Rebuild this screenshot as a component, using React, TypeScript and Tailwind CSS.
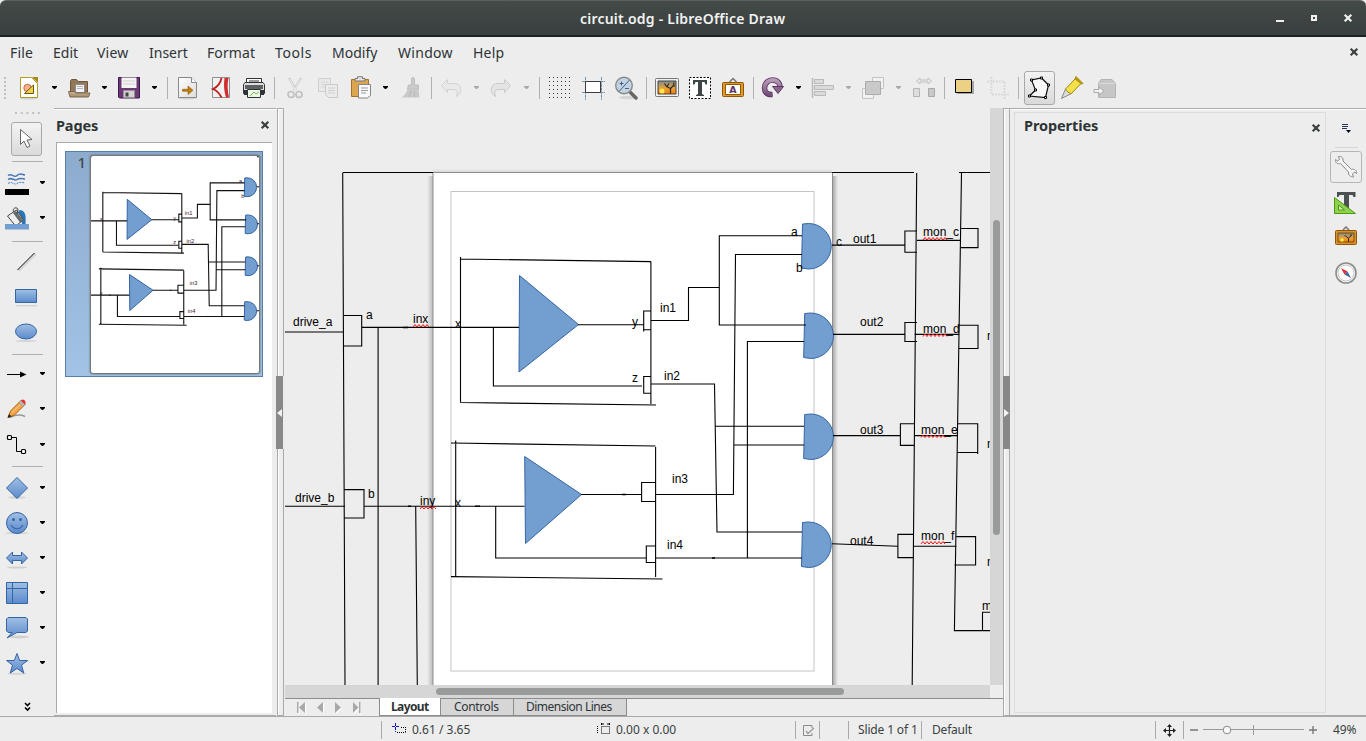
import React from "react";

type P = { children?: React.ReactNode; className?: string };

const Ico = ({ children, className = "" }: P) => (
  <svg viewBox="0 0 24 24" width="24" height="24" fill="none" className={"block shrink-0 " + className}>
    {children}
  </svg>
);

const Arrow = ({ off = false, className = "ml-[9px]" }: { off?: boolean; className?: string }) => (
  <svg viewBox="0 0 8 24" width="8" height="24" className={"block shrink-0 " + className}>
    <path d="M2 10h5v1l-2 2h-1l-2-2z" fill={off ? "#a9a9a9" : "#000"} />
  </svg>
);

const Sep = ({ className = "ml-2" }: P) => <div className={"h-[22px] w-px shrink-0 bg-[#b1b1b1] " + className} />;

const Cross = ({ color, className = "" }: { color: string; className?: string }) => (
  <svg viewBox="0 0 10 10" width="10" height="10" className={"block shrink-0 " + className}>
    <path d="M1.7 1.7l6.6 6.6M8.3 1.7L1.7 8.3" stroke={color} strokeWidth="2.2" />
  </svg>
);

const Defs = () => (
  <svg width="0" height="0" className="absolute">
    <defs>
      <linearGradient id="blue" x1="0" y1="0" x2="0" y2="1">
        <stop offset="0" stopColor="#a0bfe4" />
        <stop offset="1" stopColor="#5b8acb" />
      </linearGradient>
      <linearGradient id="sky" x1="0" y1="0" x2="0" y2="1">
        <stop offset="0" stopColor="#7c8a93" />
        <stop offset=".55" stopColor="#e8a33c" />
        <stop offset="1" stopColor="#f57900" />
      </linearGradient>
      <linearGradient id="paper" x1="0" y1="0" x2="1" y2="1">
        <stop offset="0" stopColor="#ffffff" />
        <stop offset="1" stopColor="#dcdcdc" />
      </linearGradient>
      <linearGradient id="purple" x1="0" y1="0" x2="0" y2="1">
        <stop offset="0" stopColor="#b79ab8" />
        <stop offset="1" stopColor="#75507b" />
      </linearGradient>
      <linearGradient id="tan" x1="0" y1="0" x2="0" y2="1">
        <stop offset="0" stopColor="#c9b598" />
        <stop offset="1" stopColor="#a48b6a" />
      </linearGradient>
      <linearGradient id="shade" x1="0" y1="0" x2="1" y2="0">
        <stop offset="0" stopColor="#000" stopOpacity="0" />
        <stop offset="1" stopColor="#000" stopOpacity=".22" />
      </linearGradient>
      <linearGradient id="shadeR" x1="1" y1="0" x2="0" y2="0">
        <stop offset="0" stopColor="#000" stopOpacity="0" />
        <stop offset="1" stopColor="#000" stopOpacity=".33" />
      </linearGradient>
      <linearGradient id="shadeT" x1="0" y1="0" x2="0" y2="1">
        <stop offset="0" stopColor="#000" stopOpacity="0" />
        <stop offset="1" stopColor="#000" stopOpacity=".12" />
      </linearGradient>
    </defs>
  </svg>
);

function Toolbar() {
  return (
    <div className="flex h-[40px] items-center">
      <svg width="2" height="24" viewBox="0 0 2 24" className="ml-1 block shrink-0">
        <path d="M1 1v23" stroke="#c0c0c0" strokeWidth="2" strokeDasharray="2 2" />
      </svg>
      <Ico className="ml-[11px]">
        <ellipse cx="12" cy="22.3" rx="9" ry="1.3" fill="#d3d3d3" />
        <path d="M3.500 1.500h11l6 6v14h-17z" fill="#fff" stroke="#b49a23" />
        <path d="M15 1h6v6z" fill="#a88a10" />
        <circle cx="10.500" cy="12" r="3.700" fill="#f6b08f" stroke="#d0633a" />
        <path d="M7.500 17.500h9V9z" fill="#edd44a" stroke="#6d550a" />
      </Ico>
      <Arrow />
      <Ico className="ml-[9px]">
        <path d="M3.500 16V5l1-1.500h5l1.500 2h9.500V16z" fill="#93795a" stroke="#6e5637" />
        <path d="M8.500 8.500h9v8h-9z" fill="#f4f4f4" stroke="#8b8b8b" />
        <path d="M10 10.500h6M10 12.500h6" stroke="#b5b5b5" />
        <path d="M1.500 15.500h6l1.500 1.500h14l-1.500 4h-18.500z" fill="url(#tan)" stroke="#7d6647" />
      </Ico>
      <Arrow />
      <Ico className="ml-[9px]">
        <path d="M1.500 1.500h21v20.500h-20l-1-1z" fill="#6a3a75" stroke="#40154c" />
        <path d="M4.500 1.500h15v10.500h-15z" fill="#f4f4f4" />
        <path d="M6 5h12M6 8h12" stroke="#cfcfcf" />
        <path d="M6.500 14.500h11v7h-11z" fill="#d4d4cf" stroke="#9b8da0" />
        <path d="M8.500 16.500h3v4h-3z" fill="#454545" />
      </Ico>
      <Arrow />
      <Sep className="ml-[9px]" />
      <Ico className="ml-[7px]">
        <ellipse cx="12" cy="22" rx="10" ry="1.500" fill="#d3d3d3" />
        <path d="M3.500 1.500h13l5 5v15h-18z" fill="url(#paper)" stroke="#888a85" />
        <path d="M16.500 1.500v5h5" fill="#fff" stroke="#888a85" />
        <path d="M7.500 13.300h5.500V10l5 4.300-5 4.200v-3.200H7.500z" fill="#c17d11" stroke="#8f5902" strokeWidth=".6" />
      </Ico>
      <Ico className="ml-[10px]">
        <path d="M3.500 1.500h17v20h-17z" fill="#f1f1f1" stroke="#8f8f8f" />
        <path d="M15.500 2h4c-1.500 6-1 13 .5 19.500h-3c-2-6.500-2.500-13-1.500-19.500z" fill="#d12b2b" />
        <path d="M12.500 2c-1 5-4 9-8.500 11 4 1.500 6.500 4.500 8.500 8.500" stroke="#c01f1f" strokeWidth="1.800" />
      </Ico>
      <Ico className="ml-[9px]">
        <path d="M4.500 2.500h15v6h-15z" fill="#fafafa" stroke="#2e3436" />
        <path d="M3 6.500h18l1.500 2v9h-21v-9z" fill="#ddd" stroke="#2e3436" />
        <path d="M3 9h18v4H3z" fill="#5b6163" />
        <path d="M7 5h10" stroke="#777" strokeWidth="1.500" />
        <path d="M2 14h20v5H2z" fill="#2e3436" />
        <path d="M5.500 13.500h13v8h-13z" fill="#eef6e8" stroke="#2e3436" />
        <path d="M8 20l4-4 2 2 3-2" stroke="#73c04a" />
      </Ico>
      <Sep />
      <Ico className="ml-2">
        <path d="M6 2l7 12M18 2l-7 12" stroke="#c9c9c9" strokeWidth="2.200" />
        <path d="M6.500 3l6 11M17.500 3l-6 11" stroke="#efefef" strokeWidth=".9" />
        <circle cx="8" cy="18.500" r="3" stroke="#c1c1c1" strokeWidth="1.700" />
        <circle cx="16" cy="18.500" r="3" stroke="#c1c1c1" strokeWidth="1.700" />
      </Ico>
      <Ico className="ml-[9px]">
        <path d="M2.500 2.500h12v13h-12z" fill="#e9e9e9" stroke="#d0d0d0" />
        <path d="M5 6h7M5 8.500h7M5 11h7" stroke="#d6d6d6" />
        <path d="M9.500 8.500h12v13h-9l-3-3z" fill="#ebebeb" stroke="#c9c9c9" />
        <path d="M12 12h7M12 14.500h7M12 17h7" stroke="#cfcfcf" />
      </Ico>
      <Ico className="ml-[9px]">
        <path d="M2.500 3.500h17v17h-17z" fill="#dea550" stroke="#a4702a" />
        <path d="M6 5V2.500h2.500V.8h5v1.700H16V5z" fill="#e3e3e3" stroke="#777" />
        <path d="M9.500 8.500h12v11l-3 2.500h-9z" fill="#fafafa" stroke="#858585" />
        <path d="M12 12h7M12 14.500h7M12 17h5" stroke="#999" />
      </Ico>
      <Arrow className="ml-2" />
      <Ico className="ml-[10px]">
        <path d="M12.500 3c0-2 3-2 3 0v6h4v4h-11l1-4h3z" fill="#cbcbcb" stroke="#bdbdbd" />
        <path d="M8.500 13h11l1 8.500H2c3-1 5-4 6.500-8.500z" fill="#c9c9c9" />
        <path d="M12 15l-2 6M15.500 15v6" stroke="#b9b9b9" />
      </Ico>
      <Sep />
      <Ico className="ml-[7px]">
        <path d="M2.500 9.500l6-6v4h6c5 0 8 3 7 8-.5 2.500-2 4-4.500 5 2-3 2-7-3-7h-5.500v3z" fill="#e9e9e9" stroke="#d2d2d2" />
      </Ico>
      <Arrow off />
      <Ico className="ml-[9px]">
        <path d="M21.500 9.500l-6-6v4h-6c-5 0-8 3-7 8 .5 2.500 2 4 4.500 5-2-3-2-7 3-7h5.500v3z" fill="#e4e4e4" stroke="#cacaca" />
      </Ico>
      <Arrow off />
      <Sep className="ml-[9px]" />
      <Ico className="ml-2">
        {[1, 5, 9, 13, 17, 21].map((y) => (
          <path key={y} d={`M1 ${y + 0.500}h22`} stroke="#333" strokeDasharray="1 3" />
        ))}
      </Ico>
      <Ico className="ml-[9px]">
        <path d="M4.500 1v23M20.500 1v23M1 5.500h23M1 16.500h23" stroke="#7a94ac" strokeDasharray="3 .6" />
        <path d="M4.500 5.500h15v11h-15z" fill="#fff" stroke="#3c3c3c" />
      </Ico>
      <Ico className="ml-[9px]">
        <ellipse cx="14" cy="21.500" rx="9" ry="1.800" fill="#d6d6d6" />
        <path d="M16 16l6 6" stroke="#666" strokeWidth="3.500" strokeLinecap="round" />
        <circle cx="10" cy="9.500" r="8.300" fill="#c3d3e6" stroke="#888a85" strokeWidth="1.400" />
        <path d="M5 15.500L15.500 4M5.500 7.500h4M7.500 5.500v4M11 12.500h4" stroke="#4b6080" />
      </Ico>
      <Sep />
      <Ico className="ml-2">
        <rect x=".5" y="2.500" width="23" height="18" rx="1" fill="#f0f0ee" stroke="#777" />
        <path d="M3 5h18v13H3z" fill="url(#sky)" stroke="#444" />
        <circle cx="7" cy="15" r="2.500" fill="#fce94f" />
        <path d="M15.500 17.500v-5l3-3 .5-3M15.500 12.500l-4-2-2-3M12 10.500l2-3M18 10l2 0" stroke="#2e2a22" strokeWidth="1.200" />
      </Ico>
      <Ico className="ml-[9px]">
        <path d="M1.500 1.500h21v21h-21z" fill="#fff" stroke="#000" strokeDasharray="2 1.500" />
        <path d="M5 4h14v4.500h-1.500L16.500 6H14v12l2 1v1H8v-1l2-1V6H7.500l-1 2.500H5z" fill="#3f4648" />
      </Ico>
      <Ico className="ml-[9px]">
        <path d="M8.500 6L12 2.500 15.500 6" stroke="#777" strokeWidth="1.500" />
        <rect x="1.500" y="6.500" width="21" height="14" rx="1" fill="#e0982f" stroke="#8f5902" />
        <path d="M4.500 8.500h15v10h-15z" fill="#fff" stroke="#8f5902" />
        <text x="12" y="17" fontSize="9.500" fontWeight="bold" textAnchor="middle" fill="#5c3566" fontFamily="DejaVu Sans, sans-serif">A</text>
      </Ico>
      <Sep />
      <Ico className="ml-[6px]">
        <path d="M12.500 18.500C6 19 4.500 15 4.500 12c0-5 4-8 8-8 5 0 8 4 7.500 7.500" stroke="#5c3566" strokeWidth="5.500" />
        <path d="M12.500 18.500C6 19 4.500 15 4.500 12c0-5 4-8 8-8 5 0 8 4 7.500 7.500" stroke="url(#purple)" strokeWidth="3.800" />
        <path d="M12.500 10.500h11l-5.500 7z" fill="#8a6690" stroke="#5c3566" />
      </Ico>
      <Arrow className="ml-[10px]" />
      <Ico className="ml-[9px]">
        <path d="M1.500 2v20" stroke="#b9b9b9" strokeWidth="1.500" />
        <path d="M3.500 3.500h9v4h-9zM3.500 9.500h19v4h-19zM3.500 15.500h11v4h-11z" fill="#dadada" stroke="#b9b9b9" />
      </Ico>
      <Arrow off />
      <Ico className="ml-[9px]">
        <path d="M11.500 1.500h11v11h-11zM1.500 12.500h11v10h-11z" fill="#f2f2f2" stroke="#c4c4c4" />
        <path d="M4.500 5.500h15v13h-15z" fill="#c9c9c9" stroke="#acacac" />
      </Ico>
      <Arrow off />
      <Ico className="ml-[10px]">
        <path d="M4.500 5l3.500-3v2h8V2l3.500 3L16 8V6H8v2z" fill="#e8e8e8" stroke="#c2c2c2" />
        <path d="M1.500 12.500h6v8h-6z" fill="#dedede" stroke="#b5b5b5" />
        <path d="M16.500 12.500h6v8h-6z" fill="#c9c9c9" stroke="#a9a9a9" />
      </Ico>
      <Sep />
      <Ico className="ml-[7px]">
        <path d="M5 5h17v13H5z" fill="#777" opacity=".6" />
        <path d="M3.500 3.500h16v13h-16z" fill="#ecd184" stroke="#000" />
      </Ico>
      <Ico className="ml-[10px]">
        <path d="M5.500 1v17.500H23M1 5.500h17.500V23" stroke="#dadada" strokeWidth="2" strokeDasharray="2 1" />
      </Ico>
      <Sep />
      <div className="ml-[5px] flex h-[34px] w-[31px] shrink-0 items-center justify-center rounded-[3px] border border-[#a9a9a9] bg-gradient-to-b from-[#f3f3f3] to-[#d9d9d9]">
        <Ico>
          <path d="M1.500 20l6-6-4-10L13.500 2l7 7-3 12.500z" fill="#f8f8f8" stroke="#111" strokeWidth="1.200" />
          <path d="M.5 19h2v2h-2zM6.500 13h2v2h-2zM2.500 3h2v2h-2zM12.500 1h2v2h-2zM19.500 8h2v2h-2zM16.500 20.500h2v2h-2z" fill="#fff" stroke="#000" />
        </Ico>
      </div>
      <Ico className="ml-[5px]">
        <path d="M1.500 22.500l4-9.500 6 4.500z" fill="#ddd" stroke="#888" />
        <path d="M5.500 13L15 3l1-2.500 7 7-2.500.5-9 9.500c-2 0-5-2-6-4.500z" fill="#f3e04a" stroke="#a08a0c" />
        <path d="M16 .8l6.500 6.500-1.500 1L14.500 3z" fill="#b3930f" />
      </Ico>
      <Ico className="ml-[9px]">
        <path d="M8 3.500h11l3.500 4v14h-17v-14z" fill="#c6c6c6" stroke="#b4b4b4" />
        <path d="M6 7.500h16" stroke="#dadada" />
        <path d="M1 13.500h5V11l5 4-5 4v-2.500H1z" fill="#f2f2f2" stroke="#aaa" />
      </Ico>
    </div>
  );
}

const Rule = ({ className = "" }: P) => <div className={"ml-3 h-px w-[31px] shrink-0 bg-[#b0b0b0] " + className} />;

const Tool = ({ children, plain = false, className = "" }: P & { plain?: boolean }) => (
  <div className={"flex h-[35px] shrink-0 items-center " + (plain ? "pl-[14px] " : "pl-[5px] ") + className}>
    <Ico>{children}</Ico>
    {!plain && <Arrow className="ml-[9px]" />}
  </div>
);

const B = "#3465a4";

function DrawBar() {
  return (
    <div className="flex w-[54px] shrink-0 flex-col">
      <div className="flex h-[10px] items-center pl-[15px]">
        <svg width="26" height="2" className="block">
          <path d="M0 1h26" stroke="#c0c0c0" strokeWidth="2" strokeDasharray="2 3.700" />
        </svg>
      </div>
      <div className="ml-[11px] mt-1 flex h-[34px] w-[31px] shrink-0 items-center justify-center rounded-[3px] border border-[#a9a9a9] bg-gradient-to-b from-[#f3f3f3] to-[#dadada]">
        <Ico>
          <path d="M5.500 2.500v15l3.500-3.500 3 6.500 3-1.500-3-6 5-.5z" fill="#fff" stroke="#666" />
        </Ico>
      </div>
      <Rule className="mt-[5px]" />
      <Tool className="mt-[3px]">
        <path d="M3 4.500c4-3 6 3 9 0s5-1 8-.5M3 8.500c4-3 6 2 9 0s5-1 8-.5" stroke="#4a78b8" strokeWidth="1.500" />
        <path d="M3 12.500c4-3 6 2 9 0s5-1 8-.5" stroke="#4a78b8" strokeDasharray="2 1" />
        <path d="M0 18h24v6H0z" fill="#000" />
      </Tool>
      <Tool>
        <path d="M15 4c6 1 6 6 5.500 14h-3.500c0-5-1-9-4-12z" fill="#2777b8" />
        <path d="M2.500 10l9-6 7 10-8 6z" fill="#f0f0f0" stroke="#444" />
        <path d="M11 5l7 9-3 2.500-7-9.500z" fill="#686d6f" />
        <path d="M9 6c-3-4 4-6 4-2l-1 4" stroke="#444" />
        <path d="M0 18h24v5.500H0z" fill="#729fcf" />
      </Tool>
      <Rule className="mt-[6px]" />
      <Tool plain className="mt-[2px]">
        <path d="M5 21L22 4" stroke="#d0d0d0" strokeWidth="1.500" />
        <path d="M3.500 20L20.500 3" stroke="#000" />
      </Tool>
      <Tool plain>
        <path d="M2 20h21v1.500H2z" fill="#d5d5d5" />
        <path d="M1.500 4.500h21v13h-21z" fill="url(#blue)" stroke={B} />
      </Tool>
      <Tool plain>
        <ellipse cx="12" cy="21" rx="11" ry="1" fill="#d5d5d5" />
        <ellipse cx="12" cy="11.500" rx="10.500" ry="7.500" fill="url(#blue)" stroke={B} />
      </Tool>
      <Rule className="mt-[5px]" />
      <Tool className="mt-px">
        <path d="M2 12.500h14" stroke="#000" />
        <path d="M15 9.500l6.500 3-6.500 3z" fill="#000" />
      </Tool>
      <Tool>
        <path d="M5 20.500c6-3 11-3 15-1" stroke="#999" strokeWidth="1.500" />
        <path d="M3 20.500l2.500-6.500L16 3.500l4 4L9.500 18z" fill="#f3a446" stroke="#a86514" />
        <path d="M7 15.500L17 6" stroke="#fcd09a" />
        <path d="M14 5.500l2-2 4 4-2 2z" fill="#bbb" stroke="#888" strokeWidth=".6" />
        <path d="M16 3.500c2-3 6 1 4 4z" fill="#ef2929" />
        <path d="M2.500 21l1.500-4 2.500 2.500z" fill="#222" />
      </Tool>
      <Tool className="mt-px">
        <path d="M6 4.500h5.500v14h5.500" stroke="#000" />
        <rect x="2.500" y="2.500" width="4" height="4" rx="1" fill="#fff" stroke="#000" strokeWidth="1.200" />
        <rect x="16.500" y="16.500" width="4" height="4" rx="1" fill="#fff" stroke="#000" strokeWidth="1.200" />
      </Tool>
      <Rule className="mt-[4px]" />
      <Tool className="mt-[3px]">
        <ellipse cx="12" cy="21.500" rx="9" ry="1.500" fill="#d5d5d5" />
        <path d="M12 1.500L22.500 12 12 22.500 1.500 12z" fill="url(#blue)" stroke={B} />
      </Tool>
      <Tool>
        <ellipse cx="12" cy="22" rx="12" ry="1.200" fill="#d5d5d5" />
        <circle cx="12" cy="12" r="10.500" fill="url(#blue)" stroke={B} />
        <circle cx="8.500" cy="8.500" r="1.500" fill={B} />
        <circle cx="15.500" cy="8.500" r="1.500" fill={B} />
        <path d="M6 14c3 5 9 5 12 0" stroke={B} strokeWidth="1.200" />
      </Tool>
      <Tool>
        <ellipse cx="12" cy="21.500" rx="10" ry="1" fill="#d0d0d0" />
        <path d="M1.500 12L7.500 6v3.500h9V6l6 6-6 6v-3.500h-9V18z" fill="url(#blue)" stroke={B} />
      </Tool>
      <Tool>
        <path d="M1.500 1.500h21v21h-21z" fill="url(#blue)" stroke={B} />
        <path d="M1.500 7.500h21M7.500 1.500v21" stroke={B} />
      </Tool>
      <Tool>
        <ellipse cx="14" cy="21" rx="10" ry="1.500" fill="#d0d0d0" />
        <path d="M3 1.500h18l1.500 1.500v12L21 16.500h-9l-10 5.500 5-5.500H3L1.500 15V3z" fill="url(#blue)" stroke={B} />
      </Tool>
      <Tool>
        <ellipse cx="12" cy="22.700" rx="10" ry="1" fill="#d5d5d5" />
        <path d="M12 2.500l2.700 7h8l-6.200 4.600 2.300 8L12 17.500l-6.800 4.600 2.300-8L1.500 9.500h7.800z" fill="url(#blue)" stroke={B} />
      </Tool>
      <svg width="8" height="10" viewBox="0 0 8 10" className="ml-[24px] mt-[22px] block">
        <path d="M1 1l2.500 2.500L6 1M1 5.500L3.500 8 6 5.500" fill="none" stroke="#000" strokeWidth="1.600" />
      </svg>
    </div>
  );
}

const gate = (l: number, t: number) => `M${l + 1} ${t + 0.500}l6-.5A22.700 22.700 0 0 1 ${l + 7} ${t + 45.500}l-7-1z`;

const wave = (x: number, y: number, n: number) => {
  let d = `M${x} ${y}`;
  for (let i = 0; i < n; i++) d += "l2-2.500l2 2.500";
  return d;
};

const wires =
  "M285 332H343M342.700 172.500L345 685M343 172.500H433M344 315.500H361.700V346H344" +
  "M362 327.400H519M378.100 327V685M460.500 257V402.500M460 259L651 261.600M650.900 261.600V404M460.500 402.500L656 405" +
  "M493.400 327V386H642M578 324.800H643.600M650.500 311H643.700V331.500M650.500 329.700H643M650.500 376.500H643.700V393.300H650.500" +
  "M651 320.500H688.500V287.500H719.300M802 235.700H719.300V325H806M802 254.500H735.500L733.400 494.500H656" +
  "M804 341.500H747.400V558M651 384H714.500L717 532H802M714.800 426.300H804M733.800 445H804M656 558H802" +
  "M455.700 440.500V577M451 443L655.500 446M655.600 447V577M451 576.600L662.500 579M581 494.500H641.500" +
  "M655.600 482.500H641.600V501.500H655.600M655.600 546H646.300V562.500H655.600M495.700 506.300V558H646.300" +
  "M285 506.300H345M344 489.600H364V518H344M364 506.300H524.500M415.700 506.300L417.300 685" +
  "M832 172.500H914M916.700 173L912.200 685M832 245.100H905M917 231H904.900V252.300H917M833 334.400H905M917 322.500H904.900V341.500H917" +
  "M833 435.600H900.500M914.500 423.700H900.400V445.400H914.500M832 543.800L898 546.200M914 534.400H897.900V557.600H914" +
  "M917 240.400H961M961.300 228.500H978V247.600H961M914.500 334.400H959M959 325.200H978V348.500H959" +
  "M914.500 435.600H957M957 423.700H977.700V454M957 452.500H978M914 546.300H956.500M956.500 536.600H975.600V565H954.500" +
  "M959 172.500H990M961.500 173L954.400 630.600H990M990 612.300H982.500V630.500";

const labels: [string, number, number][] = [
  ["drive_a", 293, 326], ["a", 366, 319], ["inx", 413, 323], ["x", 455, 328], ["y", 632, 326], ["z", 632, 382],
  ["in1", 660, 312], ["in2", 664, 380], ["in3", 672, 483], ["in4", 667, 549], ["drive_b", 295, 502], ["b", 368, 498],
  ["iny", 420, 505], ["x", 455, 507], ["a", 791, 236], ["b", 796, 272], ["c", 836, 246], ["out1", 853, 243],
  ["out2", 860, 326], ["out3", 860, 434], ["out4", 850, 545], ["mon_c", 923, 236], ["mon_d", 923, 333],
  ["mon_e", 921, 434], ["mon_f", 921, 540], ["m", 982, 610], ["m", 987, 340], ["m", 987, 448], ["m", 987, 566],
];

const Diagram = ({ thumb = false }: { thumb?: boolean }) => (
  <g fontFamily="Liberation Sans, Arial, sans-serif" fontSize={thumb ? "14" : "12"}>
    <g fill="#729fcf" stroke={B}>
      <path d="M519.500 275.500L578.500 324.500 519 372z" vectorEffect="non-scaling-stroke" />
      <path d="M524.700 456.500L581.500 494.500 525.500 543.500z" vectorEffect="non-scaling-stroke" />
      {[[801.500, 223.500], [803.700, 313], [803.700, 414], [801.500, 522]].map(([l, t]) => (
        <path key={t} d={gate(l, t)} vectorEffect="non-scaling-stroke" />
      ))}
    </g>
    <path d={wires} fill="none" stroke={thumb ? "#111" : "#000"} strokeWidth="1.100" vectorEffect="non-scaling-stroke" />
    <path d="M403 327.400h5M408 506.300h3M475 506.300h5M712 558h3M622 494.500h4" stroke="#000" strokeWidth="1.500" />
    {labels
      .filter(([, x]) => !thumb || (x > 440 && x < 830))
      .map(([s, x, y], i) => (
        <text key={i} x={thumb ? x - 2 : x} y={y} fill={thumb ? "#40182c" : "#000"}>{s}</text>
      ))}
    {!thumb && (
      <path
        d={wave(413, 327, 4) + wave(420, 509, 4) + wave(923, 240, 6) + wave(923, 336.500, 6) + wave(921, 437.500, 6) + wave(921, 544, 6)}
        fill="none"
        stroke="#f01010"
      />
    )}
  </g>
);

function Pages() {
  return (
    <div className="flex w-[222px] shrink-0 flex-col border-t border-[#aaaaaa] bg-[#ededed]">
      <div className="flex h-[33px] items-center justify-between pl-[2px] pr-[6px] shadow-[inset_0_1px_0_#fff]">
        <span className="font-['Noto_Sans',sans-serif] text-[14.5px] font-bold tracking-[-0.15px] text-[#2e3436]">Pages</span>
        <Cross color="#3c3f40" />
      </div>
      <div className="ml-[2px] mr-[4px] h-[572px] border-l border-t border-[#aaaaaa] bg-white pl-2 pt-2">
        <div className="flex h-[226px] w-[198px] border border-[#587fa8] bg-gradient-to-b from-[#8daccd] to-[#a3c3e4]">
          <div className="w-[24px] pr-1 text-right font-['Noto_Sans',sans-serif] text-[15px] font-medium leading-[20px] text-[#43474a]">1</div>
          <svg viewBox="432 171 405 523" preserveAspectRatio="none" className="mt-[3px] block h-[219px] w-[170px] rounded-[3px] border border-[#777] bg-white shadow-[0_0_2px_#555]">
            <Diagram thumb />
          </svg>
        </div>
      </div>
      <div className="mt-[2px] h-px bg-[#aaaaaa]" />
    </div>
  );
}

const Splitter = ({ right = false }: { right?: boolean }) => (
  <div className={"flex shrink-0 flex-col " + (right ? "w-[7px]" : "w-[9px] pr-px")}>
    <div className={"h-[268px] w-[7px] border-x border-t border-[#aaaaaa] bg-[#ededed] shadow-[inset_1px_1px_0_#fff] " + (right ? "" : "ml-px")} />
    <div className={"flex h-[73px] items-center justify-center bg-[#888888] " + (right ? "pr-px" : "mr-px")}>
      <svg width="6" height="8" viewBox="0 0 6 8" className="block">
        <path d={right ? "M1 0v8l5-4z" : "M5 0v8L0 4z"} fill="#f3f3f3" />
      </svg>
    </div>
    <div className={"h-[267px] w-[7px] border-x border-b border-[#aaaaaa] bg-[#ededed] shadow-[inset_1px_0_0_#fff] " + (right ? "" : "ml-px")} />
  </div>
);

const Nav = ({ d }: { d: string }) => (
  <svg width="10" height="12" viewBox="0 0 10 12" className="block">
    <path d={d} fill="#fff" transform="translate(1 1)" />
    <path d={d} fill="#a8a8a8" />
  </svg>
);

function Canvas() {
  return (
    <div className="flex w-[718px] shrink-0 flex-col">
      <div className="flex h-[577px]">
        <svg viewBox="285 108 705 577" width="705" height="577" className="block shrink-0">
          <rect x="427" y="176" width="6" height="509" fill="url(#shade)" />
          <rect x="832" y="176" width="6" height="509" fill="url(#shadeR)" />
          <rect x="433" y="169" width="399" height="4" fill="url(#shadeT)" />
          <rect x="433" y="172.500" width="399.500" height="560" fill="#fff" stroke="#8d8d8d" />
          <rect x="451" y="191.500" width="363" height="479.500" fill="none" stroke="#c4c4c4" />
          <Diagram />
        </svg>
        <div className="w-[13px] bg-[#d6d6d6] px-[3px] pt-[112px]">
          <div className="h-[315px] rounded-full bg-[#999b9b]" />
        </div>
      </div>
      <div className="flex h-[13px]">
        <div className="w-[705px] bg-[#d6d6d6] py-[3px] pl-[151px]">
          <div className="h-[7px] w-[408px] rounded-full bg-[#999b9b]" />
        </div>
      </div>
      <div className="flex h-[18px] font-['Noto_Sans',sans-serif] text-[12px] text-[#2e3436]">
        <div className="flex w-[94px] items-center gap-[8px] border-t border-[#8c8c8c] pl-[12px]">
          <Nav d="M0 0h1.500v11H0zM8 0v11L2 5.500z" />
          <Nav d="M8 0v11L2 5.500z" />
          <Nav d="M2 0v11l6-5.500z" />
          <Nav d="M2 0v11l5.500-5.500zM8 0h1.500v11H8z" />
        </div>
        <div className="flex w-[62px] items-center border-x border-b border-[#8c8c8c] bg-white pl-[11px] font-bold tracking-[-0.6px]">Layout</div>
        <div className="flex w-[73px] items-center border-y border-r border-[#8c8c8c] bg-[#d6d6d6] pl-[13px] tracking-[-0.35px]">Controls</div>
        <div className="flex w-[113px] items-center border-y border-r border-[#8c8c8c] bg-[#d6d6d6] pl-[12px] tracking-[-0.5px]">Dimension Lines</div>
        <div className="flex-1 border-t border-[#8c8c8c]" />
      </div>
    </div>
  );
}

function Sidebar() {
  return (
    <div className="flex h-[608px] flex-1 border-y border-[#aaaaaa] shadow-[inset_0_1px_0_#fff]">
      <div className="ml-1 mt-[3px] flex h-[601px] w-[312px] justify-between border border-[#dcdcdc] pl-[9px] pr-1 pt-[2px]">
        <span className="font-['Noto_Sans',sans-serif] text-[14.5px] font-bold leading-5 tracking-[-0.1px] text-[#2e3436]">Properties</span>
        <Cross color="#3c3f40" className="mt-[8px]" />
      </div>
      <div className="flex w-[40px] flex-col items-center">
        <Ico className="mt-2">
          <path d="M8 7.500h6M8 9.500h6M8 11.500h5" stroke="#2a3560" />
          <path d="M12 13h5l-2.500 3z" fill="#000a20" />
        </Ico>
        <div className="mt-[6px] h-px w-[23px] bg-[#d4d4d4]" />
        <div className="mt-[3px] flex h-8 w-8 items-center justify-center rounded-[3px] border border-[#b5b5b5]">
          <Ico>
            <path
              d="M4.500 1.500l1 3-2 1.500-2-1.500c-.5 3 2 5 5 4l8 8.500c-.5 3 2 5 5 5l-1-3 2-2 2 1.500c.5-3-2-5-5-4l-8.500-8.500c.5-3-1.500-5-4.500-4.500z"
              fill="#f6f6f6"
              stroke="#888a85"
            />
          </Ico>
        </div>
        <Ico className="mt-2">
          <path d="M3 1h18.500v5h-2L18.500 4H15v14h-5V4H5.500l-1 2H3z" fill="#4b5052" />
          <path d="M.5 6.500v16h21z" fill="#8fd152" stroke="#4e9a06" />
          <path d="M4.500 14v5h6z" fill="#d5efbb" stroke="#4e9a06" />
        </Ico>
        <Ico className="mt-[11px]">
          <path d="M9 4l3-3 3 3" stroke="#777" strokeWidth="1.500" />
          <rect x="1.500" y="4.500" width="21" height="14" rx="1" fill="#d8922e" stroke="#8f5902" />
          <path d="M4 7h16v9H4z" fill="url(#sky)" stroke="#7a5010" />
          <circle cx="8" cy="14" r="1.800" fill="#fce94f" />
          <path d="M14.500 16v-4l-4-2.500M14.500 12l3-2.500M17 10V8" stroke="#2e2a22" />
        </Ico>
        <Ico className="mt-[11px]">
          <circle cx="12" cy="12" r="10" fill="#fbfbfb" stroke="#8a8c88" strokeWidth="1.600" />
          <circle cx="12" cy="12" r="8" stroke="#c5c5c5" />
          <path d="M7 7l6.500 3.500-3 3z" fill="#e03030" />
          <path d="M17 17l-6.500-3.500 3-3z" fill="#4565a0" />
        </Ico>
      </div>
    </div>
  );
}

const VBar = ({ className = "" }: P) => <div className={"h-[18px] w-px shrink-0 bg-[#aaaaaa] " + className} />;

function StatusBar() {
  return (
    <div className="flex h-[25px] items-center border-t border-[#aaaaaa] pt-[2px] font-['Noto_Sans',sans-serif] text-[12px] text-[#3a3f41]">
      <VBar className="ml-[381px]" />
      <svg width="14" height="14" viewBox="0 0 14 14" className="ml-[10px] block shrink-0">
        <path d="M3.500 0v9M0 3.500h8" stroke="#1616c0" strokeDasharray="3 1" />
        <path d="M5 9.500h8.500M13.500 4v6M9 4.500h4" stroke="#000" strokeDasharray="1 1" />
      </svg>
      <span className="ml-[6px] w-[184px]">0.61 / 3.65</span>
      <svg width="14" height="14" viewBox="0 0 14 14" className="block shrink-0">
        <path d="M5.500 3.500h8v7h-8zM1.500 3v7" fill="none" stroke="#000" strokeDasharray="1 1" />
        <path d="M5.500 0v2M5 1h3M13.500 0v2M11 1h3" stroke="#000" />
      </svg>
      <span className="ml-[6px] w-[179px]">0.00 x 0.00</span>
      <VBar />
      <svg width="13" height="13" viewBox="0 0 13 13" className="ml-[6px] block shrink-0">
        <path d="M10 4V1.500H1.500v10H10V9" fill="none" stroke="#8a8a8a" />
        <path d="M4 7l2 2.500L12 4" fill="none" stroke="#9a9a9a" strokeWidth="1.300" />
      </svg>
      <VBar className="ml-[4px]" />
      <VBar className="ml-[28px]" />
      <span className="ml-[9px] w-[63px] whitespace-nowrap tracking-[-0.15px]">Slide 1 of 1</span>
      <VBar />
      <span className="ml-[10px] w-[223px] tracking-[-0.2px]">Default</span>
      <VBar />
      <svg width="13" height="13" viewBox="0 0 13 13" className="ml-[7px] block shrink-0">
        <path d="M6.500 1v11M1 6.500h11" stroke="#222" strokeWidth="1.200" />
        <path d="M6.500 0L9 3H4zM6.500 13L9 10H4zM0 6.500L3 4v5zM13 6.500L10 4v5z" fill="#222" />
      </svg>
      <VBar className="ml-[7px]" />
      <svg width="130" height="14" viewBox="0 0 130 14" className="ml-[5px] block shrink-0">
        <path d="M1 7h8M120 7h8M124 3v8" stroke="#777" strokeWidth="1.400" fill="none" />
        <path d="M14 6.500h101M64.500 2v10" stroke="#999" fill="none" />
        <circle cx="38" cy="7" r="3.800" fill="#fafafa" stroke="#888" />
      </svg>
      <span className="ml-[14px] tracking-[-0.1px]">49%</span>
    </div>
  );
}

const MenuItem = ({ children, className = "" }: P) => <span className={"shrink-0 " + className}>{children}</span>;

export default function App() {
  return (
    <div className="flex h-[741px] w-[1366px] flex-col overflow-hidden bg-[#ededed]">
      <Defs />
      <header className="flex h-[37px] items-center rounded-t-[6px] border-b-2 border-t border-b-[#1c2223] border-t-[#59625f] bg-gradient-to-b from-[#434b49] to-[#383e3d]">
        <h1 className="ml-[580px] w-[695px] font-['Noto_Sans',sans-serif] text-[14px] font-semibold tracking-[0.22px] text-[#f2f2f2]">circuit.odg - LibreOffice Draw</h1>
        <svg width="9" height="10" className="block">
          <path d="M1 8h8" stroke="#f0f0f0" strokeWidth="2" />
        </svg>
        <svg width="8" height="8" className="ml-[26px] block">
          <path d="M2 2h4v4H2z" fill="none" stroke="#f0f0f0" strokeWidth="2" />
        </svg>
        <Cross color="#f0f0f0" className="ml-[25px]" />
      </header>
      <nav className="flex h-[31px] items-center pl-[10px] font-['Noto_Sans',sans-serif] text-[14px] text-[#2e3436]">
        <MenuItem className="w-[43px] tracking-[0.2px]">File</MenuItem>
        <MenuItem className="w-[44px]">Edit</MenuItem>
        <MenuItem className="w-[52px] tracking-[0.2px]">View</MenuItem>
        <MenuItem className="w-[58px]">Insert</MenuItem>
        <MenuItem className="w-[68px] tracking-[0.1px]">Format</MenuItem>
        <MenuItem className="w-[57px] tracking-[0.6px]">Tools</MenuItem>
        <MenuItem className="w-[66px]">Modify</MenuItem>
        <MenuItem className="w-[75px] tracking-[0.3px]">Window</MenuItem>
        <MenuItem className="w-[876px] tracking-[0.2px]">Help</MenuItem>
        <Cross color="#3c3f40" className="-mt-px" />
      </nav>
      <Toolbar />
      <main className="flex h-[608px]">
        <DrawBar />
        <Pages />
        <Splitter />
        <Canvas />
        <Splitter right />
        <Sidebar />
      </main>
      <StatusBar />
    </div>
  );
}
